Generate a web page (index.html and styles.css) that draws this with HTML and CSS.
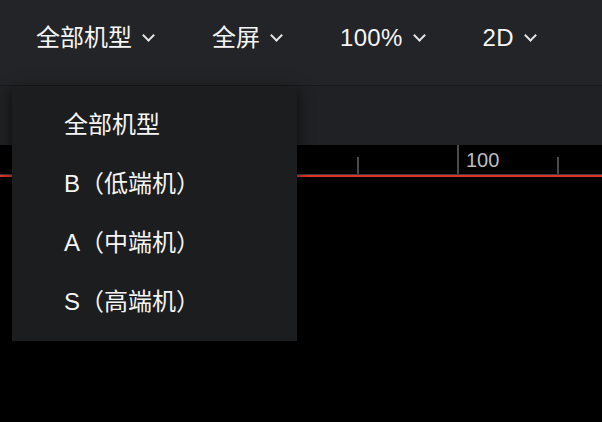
FILE: index.html
```html
<!DOCTYPE html>
<html lang="zh-CN">
<head>
    <meta charset="UTF-8">
    <meta name="viewport" content="width=device-width, initial-scale=1.0">
    <title>Preview</title>
    <link rel="stylesheet" href="styles.css">
</head>
<body>

    <div class="toolbar">
        <div class="tool-item">全部机型<span class="chevron"></span></div>
        <div class="tool-item">全屏<span class="chevron"></span></div>
        <div class="tool-item latin">100%<span class="chevron"></span></div>
        <div class="tool-item latin">2D<span class="chevron"></span></div>
    </div>

    <div class="subbar"></div>

    <div class="ruler">
        <span class="tick short" style="left: 357px"></span>
        <span class="tick long" style="left: 457px"></span>
        <span class="tick-label" style="left: 466px">100</span>
        <span class="tick short" style="left: 557px"></span>
    </div>

    <div class="stage"></div>

    <ul class="dropdown">
        <li>全部机型</li>
        <li>B（低端机）</li>
        <li>A（中端机）</li>
        <li>S（高端机）</li>
    </ul>

</body>
</html>
```

FILE: styles.css
```css
html, body {
    margin: 0;
    padding: 0;
    background-color: #000;
    font-family: "Liberation Sans", "Noto Sans CJK SC", sans-serif;
    color: #fff;
    overflow: hidden;
}
.toolbar {
    height: 86px;
    box-sizing: border-box;
    padding: 26px 0 0 36px;
    background-color: #232427;
    border-bottom: 1px solid #18191b;
    display: flex;
    gap: 59px;
}
.tool-item {
    display: flex;
    align-items: center;
    height: 24px;
    font-size: 24px;
    line-height: 24px;
    color: #f5f5f5;
}
.tool-item.latin {
    letter-spacing: 0.3px;
}
.chevron {
    width: 7px;
    height: 7px;
    margin: -5px 0 0 12px;
    border-right: 2px solid #e6e6e6;
    border-bottom: 2px solid #e6e6e6;
    transform: rotate(45deg);
}
.subbar {
    height: 59px;
    background-color: #202124;
}
.ruler {
    position: relative;
    height: 29px;
    background-color: #000;
    border-bottom: 1px solid #3c3c3c;
}
.ruler::after {
    content: "";
    position: absolute;
    left: 0;
    right: 0;
    bottom: -3px;
    height: 2px;
    background-color: #e0352b;
}
.tick {
    position: absolute;
    bottom: 0;
    width: 2px;
    background-color: #4a4a4a;
}
.tick.long {
    top: 0;
}
.tick.short {
    top: 12px;
}
.tick-label {
    position: absolute;
    top: 4px;
    font-size: 20px;
    line-height: 22px;
    color: #bdbdbd;
}
.stage {
    height: 250px;
    margin-top: 2px;
    background-color: #000;
}
.dropdown {
    position: absolute;
    left: 12px;
    top: 86px;
    width: 285px;
    margin: 0;
    padding: 9px 0 10px 0;
    list-style: none;
    background-color: #1c1d1f;
    box-shadow: 0 4px 14px rgba(0, 0, 0, 0.6);
}
.dropdown li {
    height: 59px;
    line-height: 59px;
    padding-left: 52px;
    font-size: 24px;
    color: #f5f5f5;
}
```
